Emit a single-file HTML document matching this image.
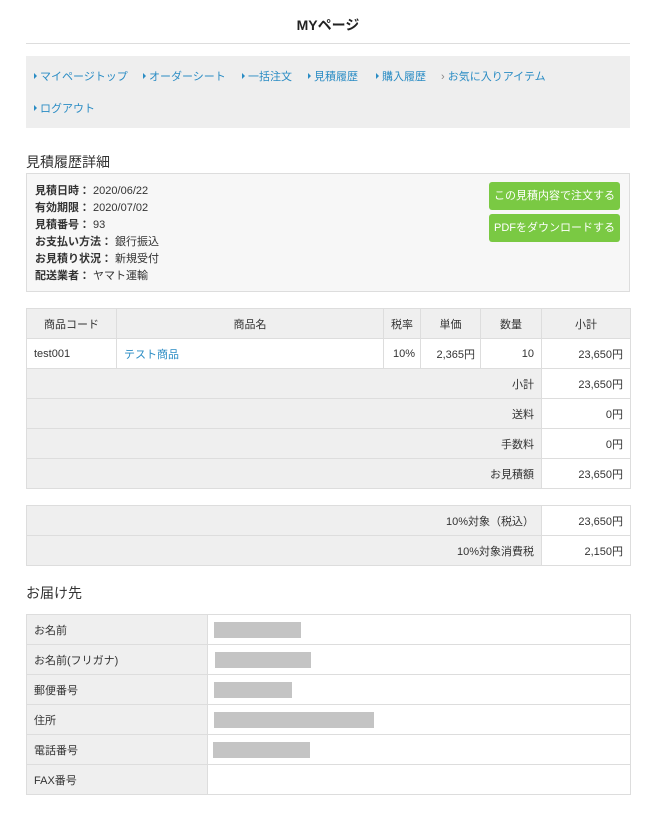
<!DOCTYPE html>
<html><head><meta charset="utf-8"><style>
*{margin:0;padding:0;box-sizing:border-box}
body{width:656px;height:826px;background:#fff;font-family:"Liberation Sans","Noto Sans CJK JP",sans-serif;color:#333;font-size:11px;position:relative;overflow:hidden}
.a{position:absolute;white-space:nowrap}
.nav a{position:absolute;color:#2a8cc4;font-size:11px;text-decoration:none;white-space:nowrap}
.nav a.t:before{content:"";display:inline-block;border-left:3px solid #2a8cc4;border-top:3px solid transparent;border-bottom:3px solid transparent;margin-right:3px;vertical-align:1px}
table{position:absolute;border-collapse:collapse;table-layout:fixed;left:26px;width:604px}
td{border:1px solid #ddd;height:30px;padding:0 7px;font-size:11px}
.g{background:#efefef}
.r{text-align:right}
.c{text-align:center}
.bar{display:inline-block;height:16px;background:#c4c4c4;vertical-align:middle}
.btn{position:absolute;left:489px;width:131px;height:28px;background:#7ac943;color:#fff;border-radius:3px;font-size:11px;text-align:center;line-height:28px}
.info div{height:17px;line-height:17px}
.info b{font-weight:bold}
</style></head><body>
<div class="a" style="left:0;width:656px;top:15px;text-align:center;font-size:14px;font-weight:bold;color:#222">MYページ</div>
<div class="a" style="left:26px;width:604px;top:43px;border-top:1px solid #ddd"></div>
<div class="a nav" style="left:26px;top:56px;width:604px;height:72px;background:#eee">
<a class="t" style="left:8px;top:12px">マイページトップ</a>
<a class="t" style="left:117px;top:12px">オーダーシート</a>
<a class="t" style="left:216px;top:12px">一括注文</a>
<a class="t" style="left:282px;top:12px">見積履歴</a>
<a class="t" style="left:350px;top:12px">購入履歴</a>
<a style="left:415px;top:12px"><span style="color:#888">›</span> お気に入りアイテム</a>
<a class="t" style="left:8px;top:44px">ログアウト</a>
</div>
<div class="a" style="left:26px;top:152px;font-size:14px;color:#333">見積履歴詳細</div>
<div class="a info" style="left:26px;top:173px;width:604px;height:119px;background:#f7f7f7;border:1px solid #ddd;padding:9px 8px">
<div><b>見積日時：</b> 2020/06/22</div>
<div><b>有効期限：</b> 2020/07/02</div>
<div><b>見積番号：</b> 93</div>
<div><b>お支払い方法：</b> 銀行振込</div>
<div><b>お見積り状況：</b> 新規受付</div>
<div><b>配送業者：</b> ヤマト運輸</div>
</div>
<div class="btn" style="top:182px">この見積内容で注文する</div>
<div class="btn" style="top:214px">PDFをダウンロードする</div>

<table style="top:308px">
<colgroup><col style="width:90px"><col style="width:267px"><col style="width:37px"><col style="width:60px"><col style="width:61px"><col style="width:89px"></colgroup>
<tr class="g c"><td>商品コード</td><td>商品名</td><td>税率</td><td>単価</td><td>数量</td><td>小計</td></tr>
<tr><td>test001</td><td style="color:#2a8cc4">テスト商品</td><td class="r" style="padding:0 5px">10%</td><td class="r" style="padding:0 5px">2,365円</td><td class="r">10</td><td class="r">23,650円</td></tr>
<tr><td colspan="5" class="g r">小計</td><td class="r">23,650円</td></tr>
<tr><td colspan="5" class="g r">送料</td><td class="r">0円</td></tr>
<tr><td colspan="5" class="g r">手数料</td><td class="r">0円</td></tr>
<tr><td colspan="5" class="g r">お見積額</td><td class="r">23,650円</td></tr>
</table>
<table style="top:505px">
<colgroup><col style="width:515px"><col style="width:89px"></colgroup>
<tr><td class="g r">10%対象（税込）</td><td class="r">23,650円</td></tr>
<tr><td class="g r">10%対象消費税</td><td class="r">2,150円</td></tr>
</table>
<div class="a" style="left:26px;top:583px;font-size:14px;color:#333">お届け先</div>
<table style="top:614px">
<colgroup><col style="width:181px"><col style="width:423px"></colgroup>
<tr><td class="g">お名前</td><td style="padding-left:6px"><span class="bar" style="width:87px"></span></td></tr>
<tr><td class="g">お名前(フリガナ)</td><td><span class="bar" style="width:96px"></span></td></tr>
<tr><td class="g">郵便番号</td><td style="padding-left:6px"><span class="bar" style="width:78px"></span></td></tr>
<tr><td class="g">住所</td><td style="padding-left:6px"><span class="bar" style="width:160px"></span></td></tr>
<tr><td class="g">電話番号</td><td style="padding-left:5px"><span class="bar" style="width:97px"></span></td></tr>
<tr><td class="g">FAX番号</td><td></td></tr>
</table>
</body></html>
